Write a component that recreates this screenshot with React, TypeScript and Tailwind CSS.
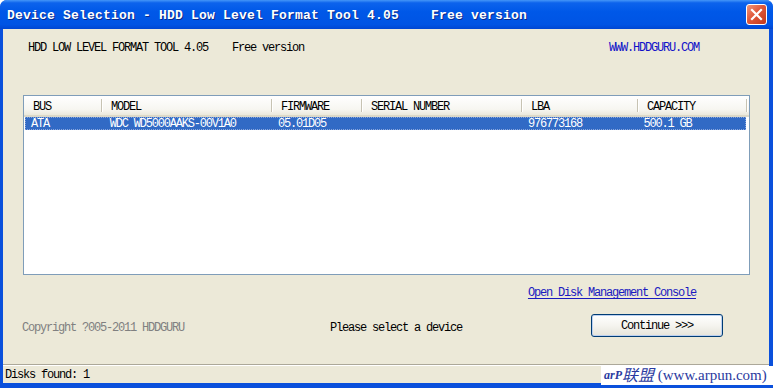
export default function App() {
  const mono = "[font-family:'Liberation_Mono',monospace] text-[12px] tracking-[-1.2px] leading-[14px]";
  const cols = [
    { name: "BUS", w: "w-[78px]", val: "ATA", vp: "pl-[5px]" },
    { name: "MODEL", w: "w-[170px]", val: "WDC WD5000AAKS-00V1A0", vp: "pl-[7px]" },
    { name: "FIRMWARE", w: "w-[90px]", val: "05.01D05", vp: "pl-[6px]" },
    { name: "SERIAL NUMBER", w: "w-[160px]", val: "", vp: "pl-[7px]" },
    { name: "LBA", w: "w-[116px]", val: "976773168", vp: "pl-[7px]" },
    { name: "CAPACITY", w: "w-[109px]", val: "500.1 GB", vp: "pl-[7px]" },
  ];
  return (
    <div className="w-[773px] h-[388px] bg-white overflow-hidden">
      <div className="w-[773px] h-[388px] flex flex-col rounded-t-[7px] bg-[#0a50dc] relative overflow-hidden">
        {/* Title bar */}
        <div className="h-[29px] flex items-center bg-[linear-gradient(to_bottom,#4596f8_0%,#0d63ec_10%,#0058e8_40%,#0054e4_85%,#0046d2_100%)] pl-[7px] pr-[6px]">
          <div className="flex-1 whitespace-pre text-white font-bold [font-family:'Liberation_Mono',monospace] text-[13px] tracking-[0.2px] [text-shadow:1px_1px_0_#0a2a8a] pt-[2px]">
            {"Device Selection - HDD Low Level Format Tool 4.05    Free version"}
          </div>
          <div className="w-[21px] h-[21px] rounded-[3px] border border-white bg-[linear-gradient(135deg,#f0977a_0%,#e0583a_45%,#c4391a_100%)] flex items-center justify-center">
            <svg width="13" height="13" viewBox="0 0 13 13">
              <path d="M2 2 L11 11 M11 2 L2 11" stroke="white" strokeWidth="2.2" strokeLinecap="square" />
            </svg>
          </div>
        </div>
        {/* Client */}
        <div className="flex-1 flex flex-col bg-[#ece9d8] ml-[3px] mr-[4px] mb-[5px]">
          <div className={`h-[46px] flex pt-[12px] ${mono}`}>
            <span className="ml-[25px] text-black">HDD LOW LEVEL FORMAT TOOL 4.05</span>
            <span className="ml-[24px] text-black">Free version</span>
            <span className="ml-[305px] text-[#1010c8]">WWW.HDDGURU.COM</span>
          </div>
          <div className="mt-[20px] ml-[20px] w-[727px] h-[180px] border border-[#7f9db9] bg-white flex flex-col">
            <div className="h-[21px] flex bg-[linear-gradient(to_bottom,#ffffff_0%,#f7f6f1_70%,#ebe9dc_100%)] border-b-[2px] border-[#dcd9c9]">
              {cols.map((c) => (
                <div key={c.name} className={`${c.w} h-full flex items-center relative pl-[9px] pt-[2px] ${mono} text-black`}>
                  {c.name}
                  <div className="absolute right-[-1px] top-[3px] bottom-[3px] w-[2px] border-l border-[#c7c3b3] border-r border-r-white" />
                </div>
              ))}
            </div>
            <div className="ml-[1px] w-[721px] h-[13px] bg-[#316ac5] flex border border-dotted border-[#8aa6dc]">
              {cols.map((c, i) => (
                <div key={c.name} className={`${i === 0 ? "w-[77px]" : c.w} ${c.vp} flex items-center ${mono} leading-[11px] text-white whitespace-pre`}>
                  {c.val}
                </div>
              ))}
            </div>
          </div>
          <div className={`mt-[11px] flex justify-end pr-[73px] ${mono}`}>
            <span className="text-[#1a1ac0] underline underline-offset-[2px]">Open Disk Management Console</span>
          </div>
          <div className="mt-[14px] h-[23px] flex items-center">
            <span className={`ml-[19px] pt-[4px] text-[#808080] ${mono}`}>Copyright ?005-2011 HDDGURU</span>
            <span className={`ml-[146px] pt-[4px] text-black ${mono}`}>Please select a device</span>
            <div className={`ml-[129px] w-[132px] h-[23px] rounded-[3px] border border-[#003c74] bg-[linear-gradient(to_bottom,#ffffff_0%,#f5f4ef_50%,#e6e4da_100%)] shadow-[inset_0_0_0_1px_#bcd0f0] flex items-center justify-center pt-[1px] text-black ${mono}`}>
              {"Continue >>>"}
            </div>
          </div>
          <div className="mt-auto border-t border-[#aca899]">
            <div className="border-t border-white h-[18px] flex items-center pl-[2px]">
              <span className={`text-black ${mono}`}>Disks found: 1</span>
            </div>
          </div>
        </div>
        {/* Watermark overlay */}
        <div className="absolute left-[601px] top-[366px] w-[172px] h-[19px] bg-white flex items-center pl-[3px] text-[#2a3aa0] [font-family:'Liberation_Serif','Noto_Sans_CJK_SC',serif] text-[15px] leading-[17px] whitespace-pre">
          <span className="italic font-bold text-[12px]">arP</span>
          <span className="italic text-[16px]">联盟</span>
          <span>{" (www.arpun.com)"}</span>
        </div>
      </div>
    </div>
  );
}
